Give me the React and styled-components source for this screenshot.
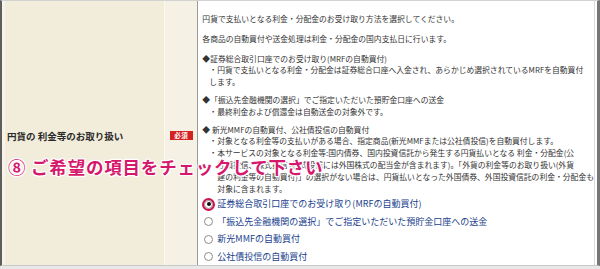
import React from "react";
import styled, { createGlobalStyle } from "styled-components";

const GlobalStyle = createGlobalStyle`
  html, body {
    margin: 0;
    padding: 0;
    background: #e8e8e8;
  }
  body {
    font-family: "Noto Sans CJK JP", "Noto Sans", sans-serif;
  }
`;

const Frame = styled.div`
  position: relative;
  width: 600px;
  height: 269px;
  overflow: hidden;
  background: #e8e8e8;
`;

const Row = styled.div`
  display: flex;
  box-sizing: border-box;
  height: 266px;
  background: #fff;
  border-top: 1px solid #d2d2d2;
  border-bottom: 1px solid #c8c8c8;
  border-left: 2px solid #5e5e5e;
  border-right: 3px solid #767676;
`;

const LabelCell = styled.div`
  box-sizing: border-box;
  width: 167px;
  display: flex;
  align-items: center;
  padding: 5px 0 0 2px;
  background: #f2ecdb;
  border-left: 3px solid #f7f3e8;
  border-right: 1px solid #fbf8f0;
  color: #2a2a2a;
  font-size: 9.5px;
  font-weight: 700;
  white-space: nowrap;
`;

const BadgeCell = styled.div`
  box-sizing: border-box;
  width: 34px;
  display: flex;
  align-items: center;
  justify-content: center;
  padding-top: 4px;
  background: #f5f1e4;
  border-right: 1px solid #9a9a9a;
`;

const Badge = styled.span`
  display: inline-flex;
  align-items: center;
  justify-content: center;
  width: 23px;
  height: 9px;
  background: #d42222;
  color: #fff;
  font-size: 6.5px;
  font-weight: 700;
  letter-spacing: 0.5px;
  line-height: 1;
`;

const ContentCell = styled.div`
  flex: 1;
  box-sizing: border-box;
  margin-right: 2px;
  padding: 12px 0 0 4px;
  border-right: 1px solid #dcdcdc;
  color: #333;
  font-size: 7.8px;
  line-height: 11.8px;
  white-space: nowrap;
`;

const Intro = styled.p`
  margin: 0 0 8px;
`;

const Section = styled.div`
  margin-bottom: 6px;
`;

const Line = styled.div`
  padding-left: ${(p) => p.$indent || 0}px;
`;

const RadioList = styled.div`
  margin-top: -5px;
  display: flex;
  flex-direction: column;
`;

const RadioRow = styled.label`
  display: flex;
  align-items: center;
  height: 17.6px;
  gap: 4px;
  color: #223f8d;
  font-size: 9px;
`;

const RadioMark = styled.span`
  position: relative;
  box-sizing: border-box;
  width: 9px;
  height: 9px;
  margin-left: 2px;
  border-radius: 50%;
  border: 1px solid #8c8c8c;
  background: #fff;
  outline: ${(p) => (p.$highlight ? "2px solid #d0144f" : "none")};
  outline-offset: 0;

  &::after {
    content: "";
    display: ${(p) => (p.$checked ? "block" : "none")};
    position: absolute;
    left: 1.5px;
    top: 1.5px;
    width: 4px;
    height: 4px;
    border-radius: 50%;
    background: #111;
  }
`;

const Callout = styled.div`
  position: absolute;
  left: 8px;
  top: 158px;
  color: #d6186d;
  font-size: 17.5px;
  font-weight: 700;
  line-height: 1;
  letter-spacing: 0.8px;
  white-space: nowrap;
  text-shadow: 1px 1px 0 #fff, -1px -1px 0 #fff, 1px -1px 0 #fff,
    -1px 1px 0 #fff, 0 1px 0 #fff, 0 -1px 0 #fff, 1px 0 0 #fff,
    -1px 0 0 #fff, 0 0 3px #fff;
`;

const intro = [
  "円貨で支払いとなる利金・分配金のお受け取り方法を選択してください。",
  "各商品の自動買付や送金処理は利金・分配金の国内支払日に行います。",
];

const sections = [
  {
    title: "◆証券総合取引口座でのお受け取り(MRFの自動買付)",
    items: [
      {
        hang: 7,
        lines: [
          "・円貨で支払いとなる利金・分配金は証券総合口座へ入金され、あらかじめ選択されているMRFを自動買付",
          "します。",
        ],
      },
    ],
  },
  {
    title: "◆「振込先金融機関の選択」でご指定いただいた預貯金口座への送金",
    items: [{ hang: 7, lines: ["・最終利金および償還金は自動送金の対象外です。"] }],
  },
  {
    title: "◆ 新光MMFの自動買付、公社債投信の自動買付",
    items: [
      {
        hang: 7,
        lines: [
          "・対象となる利金等の支払いがある場合、指定商品(新光MMFまたは公社債投信)を自動買付します。",
        ],
      },
      {
        hang: 15,
        lines: [
          "・本サービスの対象となる利金等:国内債券、国内投資信託から発生する円貨払いとなる 利金・分配金(公",
          "社債投信、株式投信 (株式投信には外国株式の配当金が含まれます)。「外貨の利金等のお取り扱い(外貨",
          "建の利金等の自動買付)」の選択がない場合は、円貨払いとなった外国債券、外国投資信託の利金・分配金も",
          "対象に含まれます。",
        ],
      },
    ],
  },
];

const options = [
  "証券総合取引口座でのお受け取り(MRFの自動買付)",
  "「振込先金融機関の選択」でご指定いただいた預貯金口座への送金",
  "新光MMFの自動買付",
  "公社債投信の自動買付",
];

export default function App() {
  return (
    <>
      <GlobalStyle />
      <Frame>
        <Row>
          <LabelCell>円貨の 利金等のお取り扱い</LabelCell>
          <BadgeCell>
            <Badge>必須</Badge>
          </BadgeCell>
          <ContentCell>
            {intro.map((t) => (
              <Intro key={t}>{t}</Intro>
            ))}
            {sections.map((s) => (
              <Section key={s.title}>
                <Line>{s.title}</Line>
                {s.items.map((item) =>
                  item.lines.map((l, i) => (
                    <Line key={l} $indent={i === 0 ? 7 : item.hang}>
                      {l}
                    </Line>
                  ))
                )}
              </Section>
            ))}
            <RadioList>
              {options.map((o, i) => (
                <RadioRow key={o}>
                  <RadioMark $checked={i === 0} $highlight={i === 0} />
                  {o}
                </RadioRow>
              ))}
            </RadioList>
          </ContentCell>
        </Row>
        <Callout>⑧ ご希望の項目をチェックして下さい</Callout>
      </Frame>
    </>
  );
}
